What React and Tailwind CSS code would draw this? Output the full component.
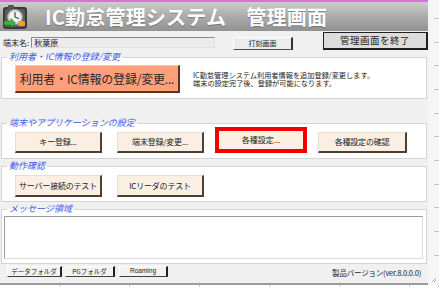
import React from 'react'

const jp = "font-['Noto_Sans_CJK_JP','Liberation_Sans',sans-serif]"

function AppIcon() {
  return (
    <svg width="26" height="26" viewBox="0 0 26 26">
      <rect x="1" y="3" width="24" height="22" rx="3" fill="#3a3a3a" />
      <rect x="6" y="1" width="6" height="4" rx="1" fill="#555" />
      <rect x="3" y="5" width="20" height="18" rx="2" fill="#5c5c5c" />
      <circle cx="13" cy="13" r="7.5" fill="#d8d8d8" stroke="#9a9a9a" strokeWidth="1" />
      <circle cx="13" cy="13" r="5.5" fill="#f4f4f4" />
      <path d="M13 13 L13 8.5 M13 13 L16.5 14.5" stroke="#444" strokeWidth="1.2" strokeLinecap="round" />
      <path d="M2 17 L9 17 L9 14.5 L13.5 19 L9 23.5 L9 21 L2 21 Z" fill="#3cb83c" stroke="#1f7a1f" strokeWidth="0.6" />
      <rect x="16" y="17" width="7" height="5" rx="1" fill="#f0a020" />
    </svg>
  )
}

function Group({ title, className, children }) {
  return (
    <fieldset className={`mx-[1px] border border-[#d4d4d4] bg-white px-0 ${className}`}>
      <legend className="ml-[5px] px-[2px] text-[9px] leading-[10px] italic text-[#3d5ee8]">{title}</legend>
      {children}
    </fieldset>
  )
}

function PeachButton({ children, className = '' }) {
  return (
    <div className={`flex h-[21px] w-[87px] items-center justify-center whitespace-nowrap border-t border-l border-t-[#eadccf] border-l-[#eadccf] border-r-2 border-b-2 border-r-[#4e3f33] border-b-[#4e3f33] bg-[#fbeee3] text-[8px] tracking-[-0.2px] text-[#222] ${className}`}>
      {children}
    </div>
  )
}

function SmallButton({ children, className = '' }) {
  return (
    <div className={`flex h-[11px] items-center justify-center whitespace-nowrap border-t border-l border-t-white border-l-white border-r-2 border-b border-r-[#202020] border-b-[#404040] bg-[#f2f2f2] text-[6.5px] leading-none text-[#222] ${className}`}>
      {children}
    </div>
  )
}

export default function App() {
  const ticks = Array.from({ length: 11 })
  const cells = [60, 70, 70, 70, 70, 70, 29]

  return (
    <div className={`flex h-[287px] w-[439px] flex-col overflow-hidden bg-white ${jp}`}>
      <div className="flex h-[285px]">
        {/* Window */}
        <div className="flex h-[285px] w-[428px] flex-col border-b-2 border-[#9c9c9c] bg-[#f0f0f0]">
          {/* Title bar */}
          <div className="flex h-[31px] items-center border-t-2 border-[#e36be3] bg-gradient-to-b from-[#cdcdcd] via-[#ababab] to-[#929292] pl-[2px]">
            <AppIcon />
            <span className="ml-[17px] text-[20px] font-bold leading-none tracking-[0.2px] text-white [text-shadow:0_1px_1px_rgba(0,0,0,0.25)]">
              IC勤怠管理システム　管理画面
            </span>
          </div>

          {/* Terminal row */}
          <div className="flex h-[21px] items-start">
            <span className="ml-[3px] mt-[6px] text-[8px] leading-[11px] text-[#222]">端末名:</span>
            <div className="ml-[2px] mt-[6px] flex h-[11px] w-[184px] items-center border border-t-[#8a8a8a] border-l-[#8a8a8a] border-r-[#e0e0e0] border-b-[#e0e0e0] bg-[#ebebeb] pl-[2px] text-[8px] leading-none text-[#222]">
              秋葉原
            </div>
            <div className="ml-[18px] mt-[6px] flex h-[13px] w-[60px] items-center justify-center border-t border-l border-t-white border-l-white border-r-2 border-b border-r-[#303030] border-b-[#505050] bg-[#ececec] text-[7px] leading-none text-[#222]">
              打刻画面
            </div>
            <div className="ml-[30px] mt-[1px] flex h-[18px] w-[105px] items-center justify-center border border-[#202020] border-r-2 border-b-2 bg-[#dcdcdc] text-[9.5px] leading-none tracking-[0.5px] text-[#222]">
              管理画面を終了
            </div>
          </div>

          {/* Group 1 */}
          <Group title="利用者・IC情報の登録/変更" className="pb-[5px]">
            <div className="mt-[3px] flex items-center">
              <div className="ml-[13px] flex h-[28px] w-[165px] items-center justify-center whitespace-nowrap border-t border-l border-t-[#ffc7b0] border-l-[#ffc7b0] border-r-2 border-b-2 border-r-[#5c3426] border-b-[#5c3426] bg-[#ff9f7c] text-[12px] leading-none tracking-[-0.2px] text-[#2a2a2a]">
                利用者・IC情報の登録/変更...
              </div>
              <div className="ml-[13px] flex flex-col whitespace-nowrap text-[7.2px] leading-[8.5px] text-[#222]">
                <span>IC勤怠管理システム利用者情報を追加登録/変更します。</span>
                <span>端末の設定完了後、登録が可能になります。</span>
              </div>
            </div>
          </Group>

          {/* Group 2 */}
          <Group title="端末やアプリケーションの設定" className="mt-[19px] pb-[5px]">
            <div className="-mt-[1px] flex items-end">
              <PeachButton className="ml-[13px]">キー登録...</PeachButton>
              <PeachButton className="ml-[15px]">端末登録/変更...</PeachButton>
              <div className="ml-[11px] flex h-[26px] w-[92px] items-center justify-center border-4 border-[#f00000] bg-[#fbeee3] text-[8px] text-[#222]">
                各種設定...
              </div>
              <PeachButton className="ml-[11px] w-[89px]">各種設定の確認</PeachButton>
            </div>
          </Group>

          {/* Group 3 */}
          <Group title="動作確認" className="mt-[2px] pb-[4px]">
            <div className="mt-[4px] flex">
              <PeachButton className="ml-[13px] h-[22px]">サーバー接続のテスト</PeachButton>
              <PeachButton className="ml-[15px] h-[22px]">ICリーダのテスト</PeachButton>
            </div>
          </Group>

          {/* Group 4 */}
          <Group title="メッセージ領域" className="mt-[2px] pb-[4px]">
            <div className="ml-[2px] mt-[2px] h-[43px] w-[419px] border border-t-[#9a9a9a] border-l-[#9a9a9a] border-r-[#dcdcdc] border-b-[#dcdcdc] bg-white" />
          </Group>

          {/* Footer */}
          <div className="mt-[2px] flex items-center">
            <SmallButton className="ml-[7px] w-[55px]">データフォルダ</SmallButton>
            <SmallButton className="ml-[3px] w-[50px]">PGフォルダ</SmallButton>
            <SmallButton className="ml-[4px] w-[49px] font-['Liberation_Sans',sans-serif]">Roaming</SmallButton>
            <span className="ml-auto mr-[7px] mt-[2px] text-[7.5px] leading-none tracking-[-0.2px] text-[#222]">
              製品バージョン(ver.8.0.0.0)
            </span>
          </div>
        </div>

        {/* Right strip */}
        <div className="flex flex-1 flex-col bg-[#f5f5f5] pt-[18px]">
          {ticks.map((_, i) => (
            <div key={i} className="mb-[23px] ml-auto h-px w-[5px] bg-[#c6c6c6]" />
          ))}
          <svg className="ml-[2px] mt-auto mb-[2px]" width="8" height="7" viewBox="0 0 8 7">
            <path d="M7 0 L1 6 M7 3 L4 6" stroke="#9a9a9a" strokeWidth="1" />
          </svg>
        </div>
      </div>

      {/* Sheet grid under the window */}
      <div className="flex h-[2px]">
        {cells.map((w, i) => (
          <div key={i} style={{ width: w }} className="h-full border-r border-[#d0d0d0]" />
        ))}
      </div>
    </div>
  )
}
